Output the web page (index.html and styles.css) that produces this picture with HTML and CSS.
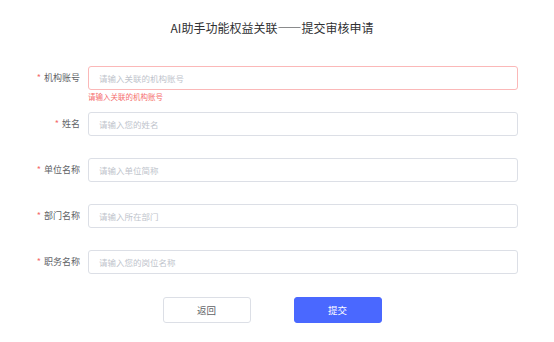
FILE: index.html
```html
<!DOCTYPE html>
<html lang="zh-CN">
<head>
    <meta charset="UTF-8">
    <meta name="viewport" content="width=device-width, initial-scale=1.0">
    <title>提交审核申请</title>
    <link rel="stylesheet" href="styles.css">
</head>
<body>
    <div class="container">
        <h1 class="title">AI助手功能权益关联——提交审核申请</h1>

        <form class="apply-form">
            <div class="form-item is-error">
                <label class="form-label" for="account">机构账号</label>
                <div class="form-content">
                    <input id="account" class="form-input" type="text" placeholder="请输入关联的机构账号">
                    <div class="form-error">请输入关联的机构账号</div>
                </div>
            </div>

            <div class="form-item">
                <label class="form-label" for="name">姓名</label>
                <div class="form-content">
                    <input id="name" class="form-input" type="text" placeholder="请输入您的姓名">
                </div>
            </div>

            <div class="form-item">
                <label class="form-label" for="unit">单位名称</label>
                <div class="form-content">
                    <input id="unit" class="form-input" type="text" placeholder="请输入单位简称">
                </div>
            </div>

            <div class="form-item">
                <label class="form-label" for="dept">部门名称</label>
                <div class="form-content">
                    <input id="dept" class="form-input" type="text" placeholder="请输入所在部门">
                </div>
            </div>

            <div class="form-item">
                <label class="form-label" for="post">职务名称</label>
                <div class="form-content">
                    <input id="post" class="form-input" type="text" placeholder="请输入您的岗位名称">
                </div>
            </div>

            <div class="form-actions">
                <button type="button" class="btn">返回</button>
                <button type="submit" class="btn btn-primary">提交</button>
            </div>
        </form>
    </div>
</body>
</html>
```

FILE: styles.css
```css
body {
    margin: 0;
    font-family: "Noto Sans CJK SC", "Noto Sans", sans-serif;
    background-color: #fff;
}
.container {
    width: 544px;
    padding-top: 18px;
}
.title {
    margin: 0 0 28px;
    font-size: 12px;
    line-height: 20px;
    font-weight: normal;
    color: #303133;
    text-align: center;
}
.form-item {
    display: flex;
    align-items: flex-start;
    margin-bottom: 22px;
}
.form-label {
    width: 80px;
    padding-right: 8px;
    text-align: right;
    font-size: 9px;
    line-height: 24px;
    color: #606266;
}
.form-label::before {
    content: "*";
    color: #f56c6c;
    margin-right: 3px;
}
.form-content {
    position: relative;
    width: 430px;
}
.form-input {
    display: block;
    box-sizing: border-box;
    width: 100%;
    height: 24px;
    padding: 0 10px;
    border: 1px solid #dcdfe6;
    border-radius: 3px;
    font-family: inherit;
    font-size: 8.5px;
    color: #606266;
    outline: none;
}
.form-input::placeholder {
    color: #c0c4cc;
}
.is-error .form-input {
    border-color: #fbb8b8;
}
.form-error {
    position: absolute;
    top: 100%;
    left: 0;
    padding-top: 2px;
    font-size: 7.5px;
    line-height: 10px;
    color: #f56c6c;
}
.form-actions {
    display: flex;
    justify-content: center;
    gap: 43px;
    padding-top: 1px;
}
.btn {
    width: 88px;
    height: 26px;
    border: 1px solid #dcdfe6;
    border-radius: 3px;
    background-color: #fff;
    color: #606266;
    font-family: inherit;
    font-size: 9.5px;
    cursor: pointer;
}
.btn-primary {
    background-color: #4a68ff;
    border-color: #4a68ff;
    color: #fff;
}
```
